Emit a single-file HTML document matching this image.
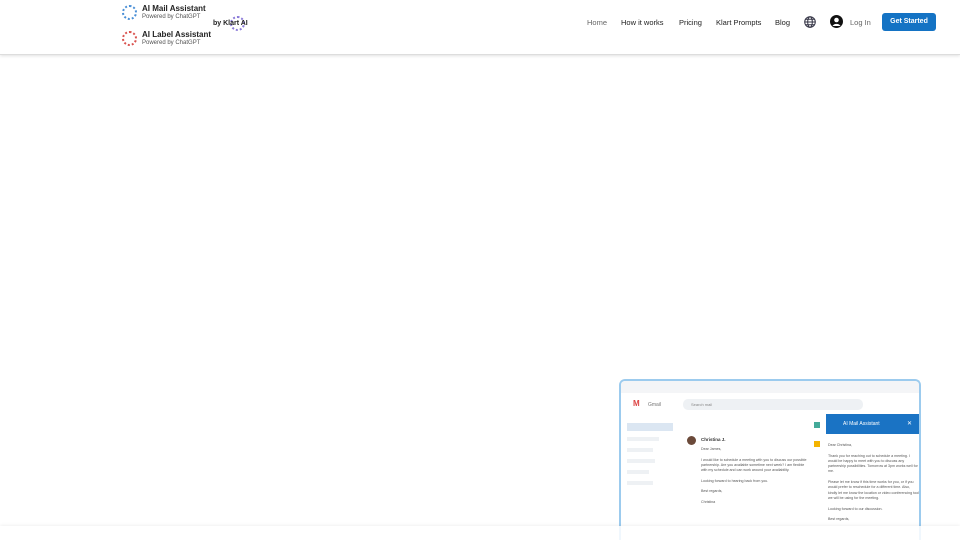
<!DOCTYPE html>
<html style="overflow:hidden;height:540px"><head><meta charset="utf-8"><style>
*{margin:0;padding:0;box-sizing:border-box}
body{width:960px;height:540px;overflow:hidden;background:#fff;font-family:"Liberation Sans",sans-serif;position:relative}
.hdr{position:absolute;left:0;top:0;width:960px;height:55px;border-bottom:1px solid #ddd;box-shadow:0 1px 3px rgba(0,0,0,.12);background:#fff}
.t{position:absolute;white-space:nowrap}
.nav{font-size:7.5px;color:#222;top:18px}
.ring{position:absolute;width:15px;height:15px;border-radius:50%;border:2px dotted}
.s{font-size:6px;color:#555}
.b{font-size:8px;font-weight:bold;color:#222}
.shot{position:absolute;left:619px;top:379px;width:302px;height:161px;border:2px solid #9ccbee;border-bottom:none;border-radius:6px 6px 0 0;background:#fff;overflow:hidden}
.tiny{font-size:3.6px;color:#555;line-height:5.3px;position:absolute}
.g{position:absolute;background:#eef1f4}
</style></head><body>
<div class="hdr">
<div class="ring" style="left:122px;top:5px;border-color:#4a8fd6"></div>
<div class="t b" style="left:142px;top:4px">AI Mail Assistant</div>
<div class="t s" style="left:142px;top:14px">Powered by ChatGPT</div>
<div class="ring" style="left:122px;top:31px;border-color:#d9534f"></div>
<div class="t b" style="left:142px;top:30px">AI Label Assistant</div>
<div class="t s" style="left:142px;top:40px">Powered by ChatGPT</div>
<div class="ring" style="left:230px;top:16px;border-color:#8a7ad8"></div>
<div class="t" style="left:213px;top:20px;font-size:7px;font-weight:bold;color:#222">by Klart AI</div>
<div class="t nav" style="left:587px;color:#666">Home</div>
<div class="t nav" style="left:621px">How it works</div>
<div class="t nav" style="left:679px">Pricing</div>
<div class="t nav" style="left:716px">Klart Prompts</div>
<div class="t nav" style="left:775px">Blog</div>
<svg style="position:absolute;left:804px;top:16px" width="12" height="12" viewBox="0 0 12 12" fill="none" stroke="#334" stroke-width="1"><circle cx="6" cy="6" r="5.3"/><ellipse cx="6" cy="6" rx="2.3" ry="5.3"/><path d="M.7 6h10.6M1.5 3.3h9M1.5 8.7h9"/></svg>
<svg style="position:absolute;left:830px;top:15px" width="13" height="13" viewBox="0 0 13 13"><circle cx="6.5" cy="6.5" r="6.5" fill="#111"/><circle cx="6.5" cy="5" r="2.3" fill="#fff"/><path d="M2.5 11a4.5 4 0 0 1 8 0" fill="#fff"/></svg>
<div class="t nav" style="left:850px;color:#666">Log In</div>
<div style="position:absolute;left:882px;top:13px;width:54px;height:18px;background:#1473c4;border-radius:3px;color:#fff;font-size:7px;font-weight:bold;text-align:center;line-height:18px">Get Started</div>
</div>
<div class="shot">
<div style="position:absolute;left:0;top:0;width:100%;height:12px;background:#f4f5f7"></div>
<div class="t" style="left:12px;top:18px;font-size:8px;font-weight:bold;color:#d44">M</div>
<div class="t" style="left:27px;top:21px;font-size:5px;color:#777">Gmail</div>
<div class="g" style="left:62px;top:18px;width:180px;height:11px;border-radius:5px"></div>
<div class="t" style="left:70px;top:21px;font-size:4px;color:#888">Search mail</div>
<div class="g" style="left:6px;top:42px;width:46px;height:8px;background:#dbe6f2"></div>
<div class="g" style="left:6px;top:56px;width:32px;height:4px"></div>
<div class="g" style="left:6px;top:67px;width:26px;height:4px"></div>
<div class="g" style="left:6px;top:78px;width:28px;height:4px"></div>
<div class="g" style="left:6px;top:89px;width:22px;height:4px"></div>
<div class="g" style="left:6px;top:100px;width:26px;height:4px"></div>
<div style="position:absolute;left:66px;top:55px;width:9px;height:9px;border-radius:50%;background:#6b4a3a"></div>
<div class="t" style="left:80px;top:56px;font-size:4.5px;font-weight:bold;color:#333">Christina J.</div>
<div class="tiny" style="left:80px;top:66px;width:110px">Dear James,<br><br>I would like to schedule a meeting with you to discuss our possible partnership. Are you available sometime next week? I am flexible with my schedule and can work around your availability.<br><br>Looking forward to hearing back from you.<br><br>Best regards,<br><br>Christina</div>
<div style="position:absolute;left:205px;top:33px;width:95px;height:20px;background:#1a73c4"></div>
<div class="t" style="left:222px;top:40px;font-size:5px;color:#fff">AI Mail Assistant</div>
<div class="t" style="left:286px;top:39px;font-size:6px;color:#fff">✕</div>
<div style="position:absolute;left:193px;top:41px;width:6px;height:6px;background:#4a9"></div>
<div style="position:absolute;left:193px;top:60px;width:6px;height:6px;background:#f4b400"></div>
<div class="tiny" style="left:207px;top:62px;width:92px">Dear Christina,<br><br>Thank you for reaching out to schedule a meeting. I would be happy to meet with you to discuss any partnership possibilities. Tomorrow at 3pm works well for me.<br><br>Please let me know if this time works for you, or if you would prefer to reschedule for a different time. Also, kindly let me know the location or video conferencing tool we will be using for the meeting.<br><br>Looking forward to our discussion.<br><br>Best regards,</div>
</div>
<div style="position:absolute;left:0;top:526px;width:960px;height:14px;background:rgba(255,255,255,.85);box-shadow:0 -1px 3px rgba(0,0,0,.06)"></div>
</body></html>
